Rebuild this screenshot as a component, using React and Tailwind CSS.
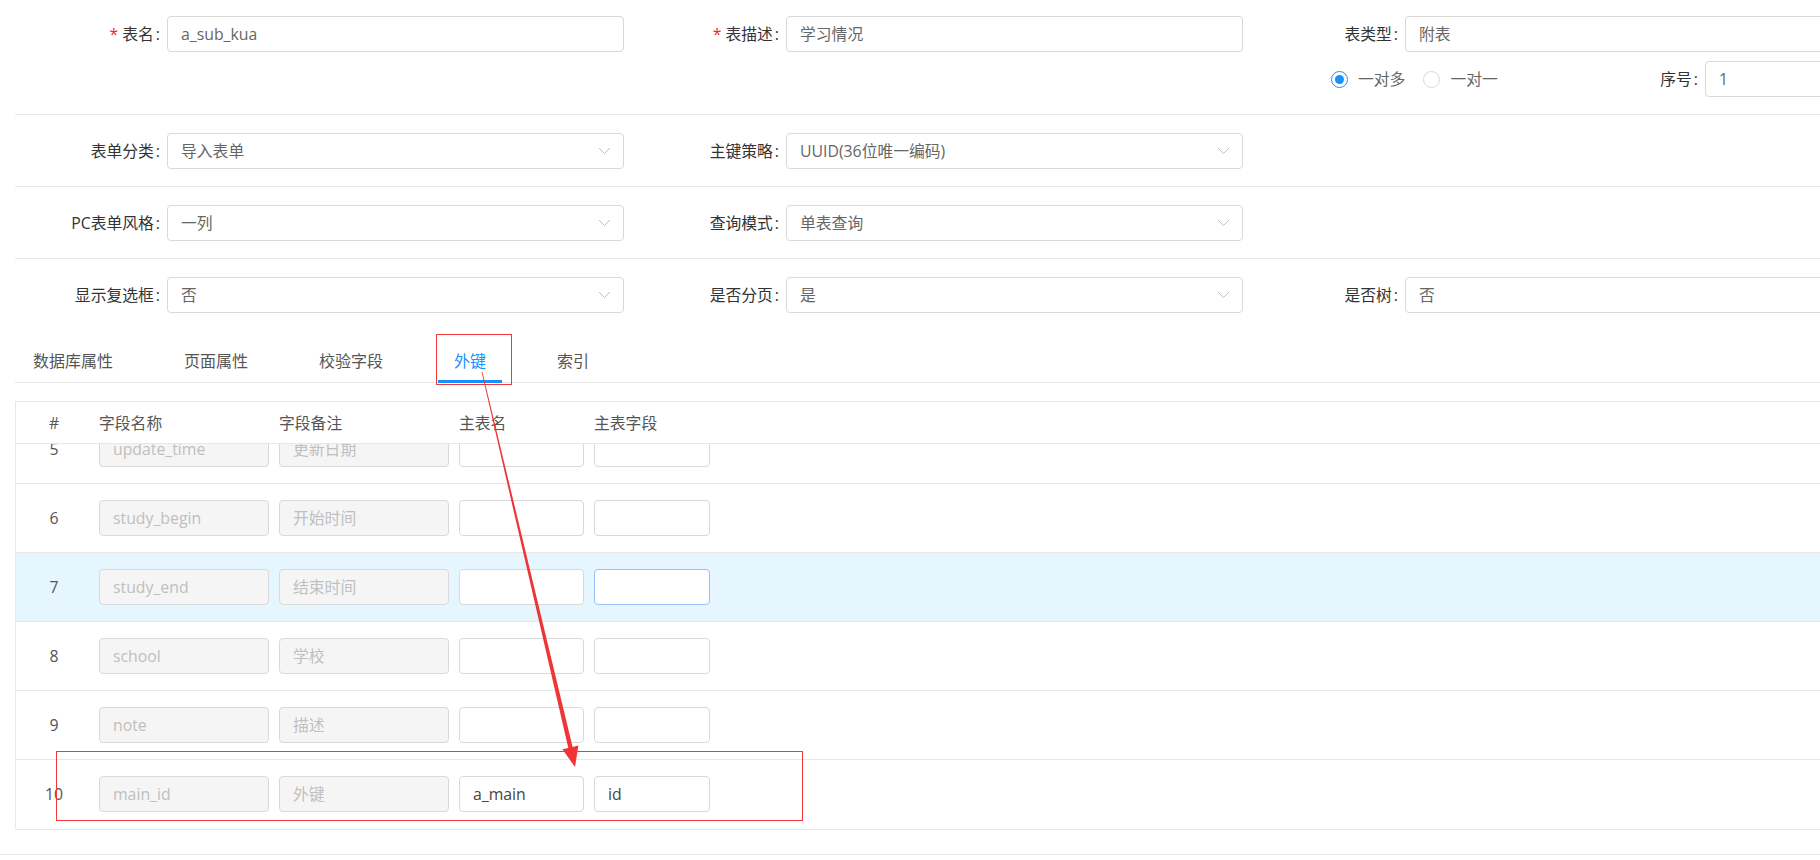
import React from "react";

const rows = [
  { no: 5, name: "update_time", note: "更新日期" },
  { no: 6, name: "study_begin", note: "开始时间" },
  { no: 7, name: "study_end", note: "结束时间", active: true },
  { no: 8, name: "school", note: "学校" },
  { no: 9, name: "note", note: "描述" },
  { no: 10, name: "main_id", note: "外键", table: "a_main", field: "id" },
];

const tabs = ["数据库属性", "页面属性", "校验字段", "外键", "索引"];

const Chevron = () => (
  <svg width="13" height="8" viewBox="0 0 13 8" className="shrink-0">
    <path d="M1 1l5.5 5.5L12 1" fill="none" stroke="#bfbfbf" strokeWidth="1" />
  </svg>
);

const Field = ({ label, required, value, select }) => (
  <div className="flex w-[619px] shrink-0 items-center">
    <div className="w-[155px] shrink-0 whitespace-nowrap text-right text-[#333]">
      {required && <span className="mr-[4px] text-[#f5222d]">*</span>}
      {label}
      <span className="ml-[2px]">:</span>
    </div>
    <div className="ml-[7px] flex h-[36px] w-[457px] shrink-0 items-center rounded-[4px] border border-[#d9d9d9] bg-white pl-[13px] pr-[12px] text-[#666]">
      <span className="flex-1">{value}</span>
      {select && <Chevron />}
    </div>
  </div>
);

const Radio = ({ checked, label }) => (
  <div className="mr-[18px] flex items-center">
    <span
      className={`flex h-[17px] w-[17px] items-center justify-center rounded-full border ${
        checked ? "border-[#1890ff]" : "border-[#d9d9d9]"
      }`}
    >
      {checked && <span className="h-[9px] w-[9px] rounded-full bg-[#1890ff]" />}
    </span>
    <span className="ml-[10px] text-[#666]">{label}</span>
  </div>
);

const Cell = ({ w, disabled, value, hover }) => (
  <div
    className={`flex h-[36px] ${w} shrink-0 items-center rounded-[4px] border px-[13px] ${
      disabled
        ? "border-[#d9d9d9] bg-[#f5f5f5] text-[#bfbfbf]"
        : hover
          ? "border-[#94c2f2] bg-white text-[#444]"
          : "border-[#d9d9d9] bg-white text-[#444]"
    }`}
  >
    {value}
  </div>
);

export default function App() {
  return (
    <div className="relative h-[860px] w-[1820px] overflow-hidden bg-white font-['Open_Sans','Noto_Sans_CJK_SC',sans-serif] text-[15.8px] leading-[22px]">
      {/* form */}
      <div className="flex pl-[5px] pt-[16px]">
        <Field required label="表名" value="a_sub_kua" />
        <Field required label="表描述" value="学习情况" />
        <Field label="表类型" value="附表" />
      </div>
      <div className="mt-[9px] flex pl-[5px]">
        <div className="w-[1238px] shrink-0" />
        <div className="flex w-[310px] shrink-0 items-center pl-[88px]">
          <Radio checked label="一对多" />
          <Radio label="一对一" />
        </div>
        <div className="flex shrink-0 items-center">
          <div className="w-[145px] text-right text-[#333]">
            序号<span className="ml-[2px]">:</span>
          </div>
          <div className="ml-[7px] flex h-[36px] w-[457px] items-center rounded-[4px] border border-[#d9d9d9] pl-[13px] text-[#666]">
            1
          </div>
        </div>
      </div>

      <div className="ml-[15px] mt-[17px] border-t border-[#e8e8e8] pb-[17px] pt-[18px]">
        <div className="-ml-[10px] flex">
          <Field label="表单分类" value="导入表单" select />
          <Field label="主键策略" value="UUID(36位唯一编码)" select />
        </div>
      </div>
      <div className="ml-[15px] border-t border-[#e8e8e8] pb-[17px] pt-[18px]">
        <div className="-ml-[10px] flex">
          <Field label="PC表单风格" value="一列" select />
          <Field label="查询模式" value="单表查询" select />
        </div>
      </div>
      <div className="ml-[15px] border-t border-[#e8e8e8] pt-[18px]">
        <div className="-ml-[10px] flex">
          <Field label="显示复选框" value="否" select />
          <Field label="是否分页" value="是" select />
          <Field label="是否树" value="否" select />
        </div>
      </div>

      {/* tabs */}
      <div className="ml-[15px] mt-[20px] flex border-b border-[#e8e8e8] pl-[2px] text-[16px]">
        {tabs.map((t) => (
          <div
            key={t}
            className={`relative mr-[39px] px-[16px] pb-[10px] pt-[17px] ${
              t === "外键" ? "text-[#1890ff]" : "text-[#555]"
            }`}
          >
            {t}
            {t === "外键" && (
              <span className="absolute inset-x-0 bottom-[-1px] h-[3px] bg-[#1890ff]" />
            )}
          </div>
        ))}
      </div>

      {/* table */}
      <div className="ml-[15px] mt-[18px] w-[1900px] border-l border-t border-[#e8e8e8]">
        <div className="flex h-[42px] items-center border-b border-[#e8e8e8] text-[#555]">
          <div className="w-[76px] shrink-0 text-center">#</div>
          <div className="ml-[7px] w-[170px] shrink-0">字段名称</div>
          <div className="ml-[10px] w-[170px] shrink-0">字段备注</div>
          <div className="ml-[10px] w-[125px] shrink-0">主表名</div>
          <div className="ml-[10px] w-[116px] shrink-0">主表字段</div>
        </div>
        <div className="h-[384px] overflow-hidden">
          <div className="-mt-[29px]">
            {rows.map((r) => (
              <div
                key={r.no}
                className={`flex h-[69px] items-center border-b border-[#e8e8e8] ${
                  r.active ? "bg-[#e6f6fe]" : ""
                }`}
              >
                <div className="w-[76px] shrink-0 text-center text-[#555]">{r.no}</div>
                <div className="ml-[7px] flex gap-[10px]">
                  <Cell w="w-[170px]" disabled value={r.name} />
                  <Cell w="w-[170px]" disabled value={r.note} />
                  <Cell w="w-[125px]" value={r.table} />
                  <Cell w="w-[116px]" value={r.field} hover={r.active} />
                </div>
              </div>
            ))}
          </div>
        </div>
      </div>
      <div className="ml-[15px] mt-[1px] h-[1px] bg-[#e8e8e8]" />
      <div className="mt-[24px] h-[1px] bg-[#e8e8e8]" />

      {/* annotations */}
      <div className="pointer-events-none absolute left-[436px] top-[334px] h-[51px] w-[76px] border border-[#f03a3a]" />
      <div className="pointer-events-none absolute left-[56px] top-[751px] h-[70px] w-[747px] border border-[#f03a3a]" />
      <svg
        className="pointer-events-none absolute left-0 top-0"
        width="1820"
        height="860"
        viewBox="0 0 1820 860"
      >
        <polygon
          points="481.6,372.1 482.4,371.9 572.6,747 578.4,745.6 575,767 562.4,749.3 568.3,748"
          fill="#ef3535"
        />
      </svg>
    </div>
  );
}
